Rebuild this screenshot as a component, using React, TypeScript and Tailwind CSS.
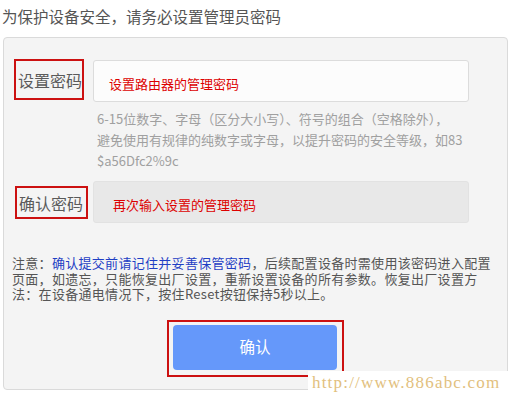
import React from "react";

const cjk = "font-['Noto_Sans_CJK_SC',sans-serif]";

function Label({ text, className }: { text: string; className: string }) {
  return (
    <div className={`flex shrink-0 items-center border-2 border-[#cc1111] pl-[2px] text-[16px] leading-none text-[#5a5a5a] ${className}`}>
      {text}
    </div>
  );
}

export default function App() {
  return (
    <div className={`relative h-[394px] w-[510px] overflow-hidden bg-white ${cjk}`}>
      <div className="h-[37px] pl-[2px] pt-[6px] text-[15.5px] leading-[21px] text-[#555]">
        为保护设备安全，请务必设置管理员密码
      </div>

      <div className="ml-[3px] h-[353px] w-[505px] rounded-[4px] border border-[#dadada] bg-[#f4f4f4] pt-[21px]">
        {/* 设置密码 */}
        <div className="flex items-start">
          <Label text="设置密码" className="ml-[10px] h-[41px] w-[70px]" />
          <div className="ml-[9px] w-[376px]">
            <div className="mt-[1px] flex h-[42px] items-center rounded-[3px] border border-[#dcdcdc] bg-[#fcfcfc] pl-[15px] pt-[5px] text-[13px] text-[#dd0000]">
              设置路由器的管理密码
            </div>
            <div className="mt-[6px] whitespace-nowrap pl-[4px] text-[13px] leading-[21px] text-[#a0a0a0]">
              6-15位数字、字母（区分大小写）、符号的组合（空格除外），
              <br />
              避免使用有规律的纯数字或字母，以提升密码的安全等级，如83
              <br />
              $a56Dfc2%9c
            </div>
          </div>
        </div>

        {/* 确认密码 */}
        <div className="mt-[10px] flex items-start">
          <Label text="确认密码" className="ml-[11px] mt-[5px] h-[33px] w-[73px]" />
          <div className="ml-[5px] flex h-[42px] w-[376px] items-center rounded-[3px] border border-[#e2e2e2] bg-[#e8e8e8] pl-[19px] pt-[6px] text-[13px] text-[#dd0000]">
            再次输入设置的管理密码
          </div>
        </div>

        <div className="mt-[32px] whitespace-nowrap pl-[8px] text-[13px] leading-[15.5px] tracking-[0.3px] text-[#555]">
          注意：<span className="text-[#1f3fc4]">确认提交前请记住并妥善保管密码</span>，后续配置设备时需使用该密码进入配置
          <br />
          页面，如遗忘，只能恢复出厂设置，重新设置设备的所有参数。恢复出厂设置方
          <br />
          法：在设备通电情况下，按住Reset按钮保持5秒以上。
        </div>

        <div className="mt-[18px] flex justify-center">
          <div className="h-[57px] w-[177px] border-2 border-[#cc1111] pl-[4px] pt-[3px]">
            <button className="flex h-[45px] w-[164px] items-center justify-center rounded-[4px] bg-[#6598fa] text-[15.5px] text-white">
              确认
            </button>
          </div>
        </div>
      </div>

      <div className="absolute bottom-0 right-0 h-[23px] w-[202px] bg-white pl-[4px] font-['Liberation_Serif',serif] text-[17px] leading-[23px] tracking-[1.2px] text-[#e2bf7e]">
        http://www.886abc.com
      </div>
    </div>
  );
}
